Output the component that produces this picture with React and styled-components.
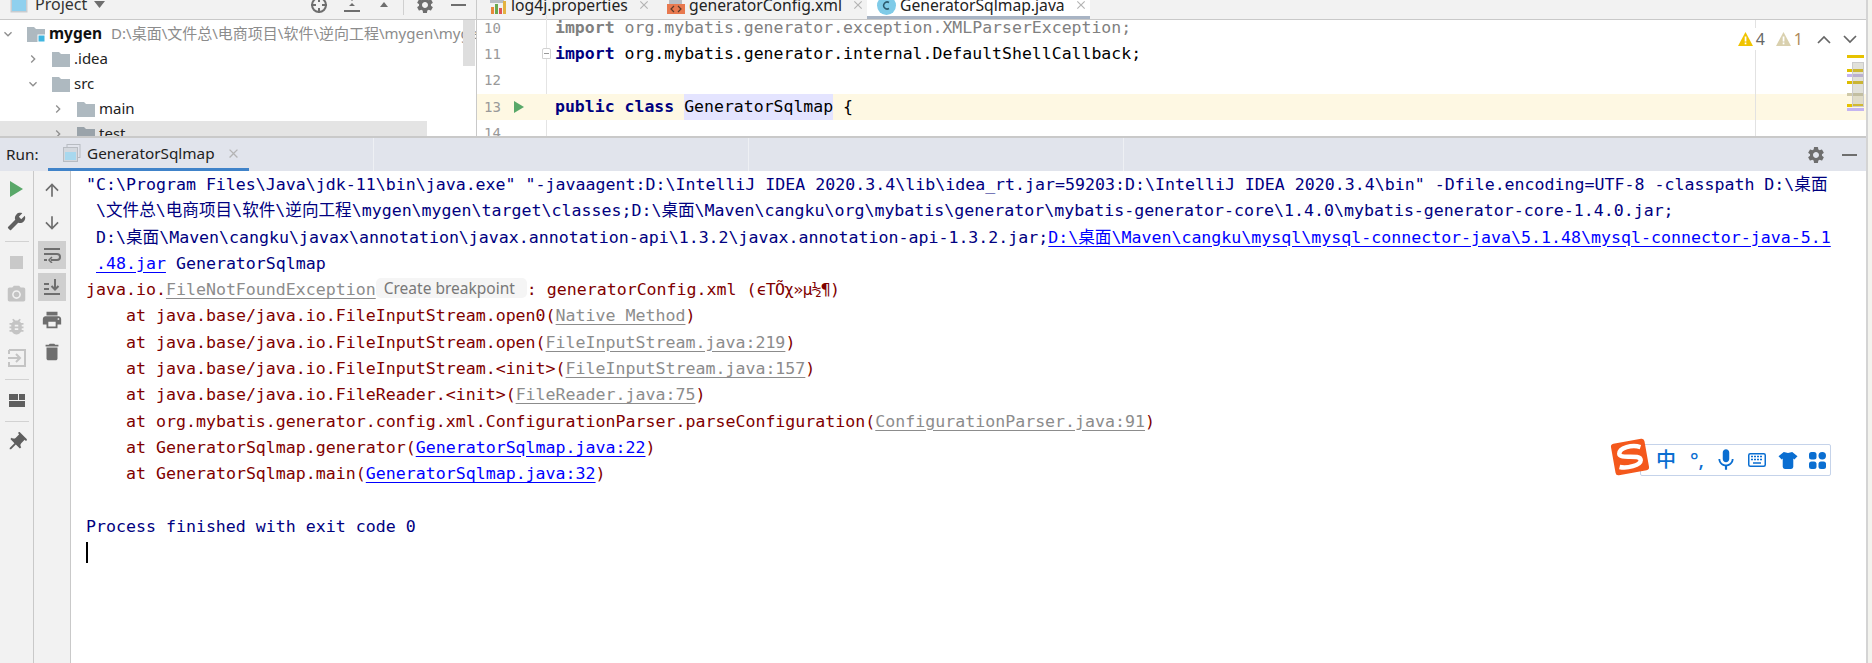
import React from "react";
import styled, { createGlobalStyle } from "styled-components";
import {
  MdSettings,
  MdBuild,
  MdPhotoCamera,
  MdBugReport,
  MdPrint,
  MdDelete,
  MdPushPin,
  MdArrowUpward,
  MdArrowDownward,
  MdMic,
  MdChevronRight,
  MdClose
} from "react-icons/md";

const uiFont = `"Noto Sans", "Noto Sans CJK SC", sans-serif`;
const monoFont = `"DejaVu Sans Mono", "Noto Sans CJK SC", monospace`;

const GlobalStyle = createGlobalStyle`
  html, body {
    margin: 0;
    padding: 0;
    background: #fff;
    overflow: hidden;
  }
`;

const Page = styled.div`
  display: flex;
  width: 1872px;
  height: 663px;
  overflow: hidden;
  position: relative;
  background: #fff;
`;

const Main = styled.div`
  flex: 1;
  min-width: 0;
  display: flex;
  flex-direction: column;
`;

const RightStrip = styled.div`
  width: 6px;
  flex: none;
  border-left: 2px solid #d4d4d4;
  box-sizing: border-box;
  background: #f3f3ee;
`;

const TopSplit = styled.div`
  display: flex;
  height: 138px;
  flex: none;
  box-sizing: border-box;
  border-bottom: 2px solid #c9c9c9;
  overflow: hidden;
`;

/* project tool window */
const ProjectPane = styled.div`
  width: 477px;
  flex: none;
  box-sizing: border-box;
  border-right: 1px solid #c9c9c9;
  position: relative;
  overflow: hidden;
`;

const PaneHeader = styled.div`
  height: 20px;
  box-sizing: border-box;
  background: #f2f2f2;
  border-bottom: 1px solid #c9c9c9;
  display: flex;
  align-items: flex-end;
  overflow: hidden;
  font: 16px/25px ${uiFont};
  color: #333;
`;

const ProjectTitle = styled.div`
  display: flex;
  align-items: center;
  height: 25px;
  flex: none;
  margin-bottom: 2px;
  padding-left: 10px;
  gap: 7px;
`;

const HeaderTools = styled.div`
  display: flex;
  align-items: center;
  height: 25px;
  margin-left: 205px;
  margin-bottom: 2px;
  gap: 16px;
  color: #6e6e6e;
`;

const ToolSep = styled.div`
  width: 1px;
  height: 20px;
  margin: 0 -5px;
  background: #d0d0d0;
`;

const Tree = styled.div`
  padding-top: 1px;
`;

const TreeRow = styled.div`
  height: 25px;
  width: 427px;
  display: flex;
  align-items: center;
  padding-left: ${p => p.$depth * 25}px;
  box-sizing: border-box;
  background: ${p => (p.$selected ? "#e4e4e4" : "transparent")};
  font: 15px/25px ${uiFont};
  color: #222;
  white-space: nowrap;
`;

const Chevron = styled.span`
  width: 16px;
  flex: none;
  display: flex;
  justify-content: center;
  color: #8f8f8f;
  transform: rotate(${p => (p.$open ? 90 : 0)}deg);
`;

const FolderSlot = styled.span`
  margin: 0 4px 0 11px;
  display: flex;
  flex: none;
`;

const RootName = styled.b`
  color: #111;
  font-size: 15.5px;
  font-weight: 700;
`;

const RootPath = styled.span`
  margin-left: 9px;
  color: #8c8c8c;
`;

const TreeThumb = styled.div`
  position: absolute;
  left: 463px;
  top: 20px;
  width: 12px;
  height: 46px;
  background: #dedede;
`;

/* editor */
const EditorPane = styled.div`
  flex: 1;
  min-width: 0;
  position: relative;
  overflow: hidden;
`;

const TabStrip = styled.div`
  height: 20px;
  box-sizing: border-box;
  background: #f2f2f2;
  border-bottom: 1px solid #c9c9c9;
  display: flex;
  align-items: flex-end;
  padding-left: 13px;
  overflow: hidden;
`;

const FileTab = styled.div`
  display: flex;
  align-items: center;
  flex: none;
  height: 25px;
  width: ${p => p.$width}px;
  box-sizing: border-box;
  gap: 4px;
  padding-left: ${p => (p.$active ? 10 : 0)}px;
  background: ${p => (p.$active ? "#fff" : "transparent")};
  box-shadow: ${p => (p.$active ? "inset 0 -3px 0 #a8b4c4" : "none")};
  font: 15.7px/25px ${uiFont};
  color: #222;
  white-space: nowrap;
  padding-bottom: 3px;
`;

const TabClose = styled.span`
  display: flex;
  color: #b4b4b4;
  margin-left: 5px;
`;

const CodeArea = styled.div`
  margin-top: -5px;
`;

const CodeRow = styled.div`
  display: flex;
  height: 26.2px;
  position: relative;
  background: ${p => (p.$current ? "#fef8e3" : "transparent")};
`;

const Gutter = styled.div`
  width: 70px;
  flex: none;
  box-sizing: border-box;
  padding-left: 7px;
  border-right: 1px solid ${p => (p.$current ? "transparent" : "#e4e4e4")};
  font: 14px/26.2px ${monoFont};
  color: #999;
  display: flex;
  align-items: center;
  gap: 13px;
`;

const CodeText = styled.div`
  padding-left: 8px;
  font: 16.5px/26.2px ${monoFont};
  color: ${p => (p.$dim ? "#808080" : "#000")};
  white-space: pre;
`;

const Keyword = styled.b`
  color: ${p => (p.$dim ? "#808080" : "#000080")};
`;

const Usage = styled.span`
  background: #e4e4ff;
  display: inline-block;
`;

const FoldMark = styled.span`
  position: absolute;
  left: 65px;
  top: 7px;
  width: 9px;
  height: 11px;
  box-sizing: border-box;
  border: 1px solid #d2d2d2;
  border-radius: 2px 2px 0 0;
  background: linear-gradient(#999, #999) center / 5px 1px no-repeat #fff;
`;

const RightGuide = styled.div`
  position: absolute;
  left: 1278px;
  top: 20px;
  bottom: 0;
  width: 1px;
  background: #e2e2e2;
`;

const InspectionWidget = styled.div`
  position: absolute;
  right: 9px;
  top: 28px;
  display: flex;
  align-items: center;
  background: #fff;
  height: 22px;
  padding-left: 3px;
  font: 16px/20px ${uiFont};
  color: #666;
`;

const Count = styled.span`
  margin: 0 11px 0 3px;
  color: ${p => p.$color || "#666"};
`;

const NavIcon = styled.svg`
  display: block;
  margin-left: ${p => p.$gap || 0}px;
  fill: none;
  stroke: #666;
  stroke-width: 1.7;
`;

const ErrorStripe = styled.div`
  position: absolute;
  left: 1370px;
  top: ${p => p.$top}px;
  width: 17px;
  height: 3px;
  background: ${p => p.$color};
`;

const StripeThumb = styled.div`
  position: absolute;
  left: 1375px;
  top: 62px;
  width: 12px;
  height: 45px;
  box-sizing: border-box;
  border: 1px solid #ccc;
  background: rgba(170, 170, 150, 0.35);
`;

/* run tool window */
const RunBar = styled.div`
  height: 33px;
  flex: none;
  display: flex;
  align-items: stretch;
  background: #e1e4ec;
  position: relative;
  font: 15.3px/33px ${uiFont};
  color: #222;
`;

const RunLabel = styled.div`
  width: 48px;
  flex: none;
  padding-left: 6px;
  box-sizing: border-box;
`;

const RunTab = styled.div`
  width: 201px;
  flex: none;
  box-sizing: border-box;
  display: flex;
  align-items: center;
  padding: 0 0 3px 15px;
  gap: 6px;
  box-shadow: inset 0 -3px 0 #4083c9;
`;

const BarDivider = styled.div`
  position: absolute;
  top: 0;
  bottom: 0;
  left: ${p => p.$left}px;
  width: 1px;
  background: #eef0f4;
`;

const RunTools = styled.div`
  margin-left: auto;
  display: flex;
  align-items: center;
  gap: 16px;
  padding-right: 9px;
  color: #6e6e6e;
`;

const MinusBar = styled.div`
  width: 15px;
  height: 2px;
  background: #6e6e6e;
`;

const RunBody = styled.div`
  flex: 1;
  display: flex;
  min-height: 0;
`;

const ToolColumn = styled.div`
  width: ${p => p.$width}px;
  flex: none;
  box-sizing: border-box;
  background: #f2f2f2;
  border-right: 1px solid #c9c9c9;
  padding-top: ${p => p.$top}px;
  display: flex;
  flex-direction: column;
  align-items: center;
`;

const ToolSlot = styled.div`
  height: ${p => p.$h || 32}px;
  width: 100%;
  flex: none;
  display: flex;
  align-items: center;
  justify-content: center;
  color: ${p => p.$color || "#6e6e6e"};
`;

const ActiveBox = styled.div`
  width: 28px;
  height: 28px;
  background: #cfcfcf;
  display: flex;
  align-items: center;
  justify-content: center;
`;

const ColumnSep = styled.div`
  width: 24px;
  height: 1px;
  margin: ${p => p.$m || 4}px 0;
  flex: none;
  background: #d2d2d2;
`;

const Console = styled.div`
  flex: 1;
  min-width: 0;
  padding: 1px 0 0 15px;
  font: 16.6px/26.3px ${monoFont};
  white-space: pre;
`;

const Line = styled.div`
  height: 26.3px;
  padding-left: ${p => p.$indent || 0}px;
  color: ${p => (p.$err ? "#7f0000" : "#00007f")};
`;

const FileLink = styled.span`
  text-decoration: underline;
  text-underline-offset: 3px;
  color: ${p => (p.$dim ? "#8c8c8c" : "#0000ff")};
`;

const Garbled = styled.span`
  letter-spacing: -0.8px;
`;

const BreakpointPill = styled.span`
  display: inline-block;
  width: 151px;
  height: 20px;
  box-sizing: border-box;
  padding-left: 8px;
  border-radius: 5px;
  background: #f5f5f5;
  color: #787878;
  font: 15.5px/20px ${uiFont};
  vertical-align: 1px;
`;

const Caret = styled.div`
  width: 2px;
  height: 21px;
  background: #000;
  margin-top: 2px;
`;

/* sogou input method floating bar */
const ImeBar = styled.div`
  position: absolute;
  left: 1640px;
  top: 444px;
  width: 191px;
  height: 32px;
  box-sizing: border-box;
  border: 1px solid #c5d3ea;
  border-radius: 2px;
  background: #fff;
  display: flex;
  align-items: center;
  padding-left: 14px;
  color: #0a6ed1;
  font: 500 20px/1 ${uiFont};
`;

const ImeItem = styled.span`
  width: ${p => p.$w}px;
  flex: none;
  display: flex;
  justify-content: center;

  svg {
    flex: none;
  }
`;

const ImeLogo = styled.svg`
  position: absolute;
  left: 1610px;
  top: 438px;
`;

const FolderIcon = ({ shade = "#aeb9c0", badge }) => (
  <svg width="18" height="16" viewBox="0 0 18 16">
    <path d="M0 1h7l2 2h9v13H0z" fill={shade} />
    {badge && <rect x="11" y="9" width="7" height="7" fill="#40b6e0" stroke="#fff" />}
  </svg>
);

const ProjectIcon = () => (
  <svg width="18" height="16" viewBox="0 0 18 16">
    <rect x="0.5" y="0.5" width="17" height="15" fill="#c8ccd0" />
    <rect x="2" y="2" width="14" height="12" fill="#8fd0ee" />
  </svg>
);

const TriangleDown = () => (
  <svg width="11" height="7" viewBox="0 0 11 7">
    <path d="M0 0h11L5.500 7z" fill="#6e6e6e" />
  </svg>
);

const Crosshair = () => (
  <svg width="18" height="18" viewBox="0 0 18 18" fill="none" stroke="#6e6e6e" strokeWidth="2">
    <circle cx="9" cy="9" r="7" />
    <path d="M9 1v5M9 12v5M1 9h5M12 9h5" />
  </svg>
);

const ExpandAll = () => (
  <svg width="16" height="16" viewBox="0 0 16 16" fill="#6e6e6e">
    <path d="M5 1h6L8 4zM5 9h6L8 6z" />
    <rect y="13" width="16" height="2" />
  </svg>
);

const CollapseAll = () => (
  <svg width="16" height="16" viewBox="0 0 16 16" fill="#6e6e6e">
    <rect y="1" width="16" height="2" />
    <path d="M4 10h8L8 5z" />
  </svg>
);

const PropsIcon = () => (
  <svg width="17" height="18" viewBox="0 0 17 18">
    <path d="M0 0h10l4 4v3H0z" fill="#b9bec4" />
    <rect x="1" y="11" width="3" height="7" fill="#e8883a" />
    <rect x="5" y="8" width="3" height="10" fill="#6aa84f" />
    <rect x="9" y="12" width="3" height="6" fill="#e05555" />
    <rect x="13" y="5" width="3" height="13" fill="#e3b341" />
  </svg>
);

const XmlIcon = () => (
  <svg width="18" height="18" viewBox="0 0 18 18">
    <path d="M2 0h9l4 4v4H2z" fill="#b9bec4" />
    <rect y="8" width="18" height="10" fill="#e8794f" />
    <path d="M7 10l-3 3 3 3M11 10l3 3-3 3" fill="none" stroke="#5a3a2a" strokeWidth="1.200" />
  </svg>
);

const ClassIcon = () => (
  <svg width="19" height="19" viewBox="0 0 19 19">
    <circle cx="9.500" cy="9.500" r="9.500" fill="#7fcbe8" />
    <path d="M12 6.500a3.500 3.500 0 1 0 0 6" fill="none" stroke="#2c5a6e" strokeWidth="1.500" />
  </svg>
);

const WarnTriangle = ({ color }) => (
  <svg width="15" height="14" viewBox="0 0 15 14">
    <path d="M7.500 0L15 14H0z" fill={color} />
    <rect x="6.700" y="4.500" width="1.700" height="5" fill="#fff" />
    <rect x="6.700" y="10.500" width="1.700" height="1.800" fill="#fff" />
  </svg>
);

const PlayGutter = () => (
  <svg width="10" height="12" viewBox="0 0 10 12">
    <path d="M0 0l10 6-10 6z" fill="#59a869" />
  </svg>
);

const ConsoleTabIcon = () => (
  <svg width="18" height="18" viewBox="0 0 18 18">
    <rect x="4" y="0.500" width="13" height="13" fill="none" stroke="#b8bcc2" />
    <rect x="0.500" y="3.500" width="14" height="14" fill="#d4d8de" stroke="#b8bcc2" />
    <rect x="2" y="8" width="11" height="8" fill="#a8d8ee" />
  </svg>
);

const PlayIcon = () => (
  <svg width="14" height="16" viewBox="0 0 14 16">
    <path d="M0 0l13 8-13 8z" fill="#59a869" />
  </svg>
);

const StopIcon = () => (
  <svg width="13" height="13" viewBox="0 0 13 13">
    <rect width="13" height="13" fill="#c9c9c9" />
  </svg>
);

const LoginIcon = () => (
  <svg width="18" height="18" viewBox="0 0 18 18" fill="none" stroke="#c4c4c4" strokeWidth="2">
    <path d="M1 1h16v16H1v-4M1 5V1" />
    <path d="M0 9h11M8 5l4 4-4 4" />
  </svg>
);

const LayoutIcon = () => (
  <svg width="16" height="14" viewBox="0 0 16 14" fill="#5f5f5f">
    <rect width="9" height="6" />
    <rect x="10" width="6" height="6" />
    <rect y="7" width="16" height="6" />
  </svg>
);

const WrapIcon = () => (
  <svg width="17" height="16" viewBox="0 0 17 16" fill="none" stroke="#6e6e6e" strokeWidth="2">
    <path d="M0 2h16M0 7h13a2.500 2.500 0 0 1 0 6H7M0 13h3" />
    <path d="M8 10l-3 3 3 3" strokeWidth="1.500" />
  </svg>
);

const ScrollEndIcon = () => (
  <svg width="17" height="16" viewBox="0 0 17 16" fill="none" stroke="#6e6e6e" strokeWidth="2">
    <path d="M0 15h16M0 10h5M0 5h5M11 0v10M7.500 7l3.500 3.500L14.500 7" />
  </svg>
);

const SogouLogo = () => (
  <ImeLogo width="40" height="38" viewBox="0 0 40 38">
    <g transform="rotate(-10 20 19)">
      <rect x="3" y="3" width="34" height="32" rx="3" fill="#f4581c" />
      <path
        d="M32 11C24 7 11 8 10 14c-1 6 21 3 20 10-1 5-15 6-22 3"
        fill="none"
        stroke="#fff"
        strokeWidth="4.500"
      />
    </g>
  </ImeLogo>
);

const KeyboardIcon = () => (
  <svg width="18" height="14" viewBox="0 0 18 14">
    <rect x="0.750" y="0.750" width="16.500" height="12.500" rx="1.500" fill="none" stroke="#0a6ed1" strokeWidth="1.500" />
    <path
      d="M3 3.500h12M3 6.500h12"
      fill="none"
      stroke="#0a6ed1"
      strokeWidth="1.500"
      strokeDasharray="2 1"
    />
    <path d="M5 10h8" stroke="#0a6ed1" strokeWidth="1.500" />
  </svg>
);

const ShirtIcon = () => (
  <svg width="20" height="19" viewBox="0 0 18 18" fill="#0a6ed1">
    <path d="M5 1l4 1 4-1 5 4-3 3-1-1v8a2 2 0 0 1-2 2H6a2 2 0 0 1-2-2V7L3 8 0 5z" />
  </svg>
);

const GridIcon = () => (
  <svg width="17" height="17" viewBox="0 0 17 17" fill="#0a6ed1">
    <rect width="7.500" height="7.500" rx="2.500" />
    <rect x="9.500" width="7.500" height="7.500" rx="3.700" />
    <rect y="9.500" width="7.500" height="7.500" rx="2.500" />
    <rect x="9.500" y="9.500" width="7.500" height="7.500" rx="2.500" />
  </svg>
);

const stripes = [
  { top: 55, color: "#e6c200" },
  { top: 69, color: "#e0c000" },
  { top: 74, color: "#c4b4f0" },
  { top: 81, color: "#dcbc00" },
  { top: 93, color: "#cfc9a8" },
  { top: 104, color: "#e6c200" },
  { top: 108, color: "#c4b4f0" }
];

const traces = [
  <>at java.base/java.io.FileInputStream.open0(<FileLink $dim>Native Method</FileLink>)</>,
  <>at java.base/java.io.FileInputStream.open(<FileLink $dim>FileInputStream.java:219</FileLink>)</>,
  <>at java.base/java.io.FileInputStream.&lt;init&gt;(<FileLink $dim>FileInputStream.java:157</FileLink>)</>,
  <>at java.base/java.io.FileReader.&lt;init&gt;(<FileLink $dim>FileReader.java:75</FileLink>)</>,
  <>at org.mybatis.generator.config.xml.ConfigurationParser.parseConfiguration(<FileLink $dim>ConfigurationParser.java:91</FileLink>)</>,
  <>at GeneratorSqlmap.generator(<FileLink>GeneratorSqlmap.java:22</FileLink>)</>,
  <>at GeneratorSqlmap.main(<FileLink>GeneratorSqlmap.java:32</FileLink>)</>
];

const App = () => (
  <Page>
    <GlobalStyle />
    <Main>
      <TopSplit>
        <ProjectPane>
          <PaneHeader>
            <ProjectTitle>
              <ProjectIcon />
              Project
              <TriangleDown />
            </ProjectTitle>
            <HeaderTools>
              <Crosshair />
              <ExpandAll />
              <CollapseAll />
              <ToolSep />
              <MdSettings size={20} />
              <MinusBar />
            </HeaderTools>
          </PaneHeader>
          <Tree>
            <TreeRow $depth={0}>
              <Chevron $open><MdChevronRight size={18} /></Chevron>
              <FolderSlot><FolderIcon badge /></FolderSlot>
              <RootName>mygen</RootName>
              <RootPath>D:\桌面\文件总\电商项目\软件\逆向工程\mygen\mygen</RootPath>
            </TreeRow>
            <TreeRow $depth={1}>
              <Chevron><MdChevronRight size={18} /></Chevron>
              <FolderSlot><FolderIcon /></FolderSlot>
              .idea
            </TreeRow>
            <TreeRow $depth={1}>
              <Chevron $open><MdChevronRight size={18} /></Chevron>
              <FolderSlot><FolderIcon /></FolderSlot>
              src
            </TreeRow>
            <TreeRow $depth={2}>
              <Chevron><MdChevronRight size={18} /></Chevron>
              <FolderSlot><FolderIcon /></FolderSlot>
              main
            </TreeRow>
            <TreeRow $depth={2} $selected>
              <Chevron><MdChevronRight size={18} /></Chevron>
              <FolderSlot><FolderIcon shade="#9aa3aa" /></FolderSlot>
              test
            </TreeRow>
          </Tree>
          <TreeThumb />
        </ProjectPane>
        <EditorPane>
          <TabStrip>
            <FileTab $width={177}>
              <PropsIcon />
              log4j.properties
              <TabClose><MdClose size={14} /></TabClose>
            </FileTab>
            <FileTab $width={200}>
              <XmlIcon />
              generatorConfig.xml
              <TabClose><MdClose size={14} /></TabClose>
            </FileTab>
            <FileTab $width={223} $active>
              <ClassIcon />
              GeneratorSqlmap.java
              <TabClose><MdClose size={14} /></TabClose>
            </FileTab>
          </TabStrip>
          <CodeArea>
            <CodeRow>
              <Gutter>10</Gutter>
              <CodeText $dim><Keyword $dim>import</Keyword> org.mybatis.generator.exception.XMLParserException;</CodeText>
            </CodeRow>
            <CodeRow>
              <Gutter>11</Gutter>
              <FoldMark />
              <CodeText><Keyword>import</Keyword> org.mybatis.generator.internal.DefaultShellCallback;</CodeText>
            </CodeRow>
            <CodeRow>
              <Gutter>12</Gutter>
            </CodeRow>
            <CodeRow $current>
              <Gutter $current>13 <PlayGutter /></Gutter>
              <CodeText><Keyword>public</Keyword> <Keyword>class</Keyword> <Usage>GeneratorSqlmap</Usage> {"{"}</CodeText>
            </CodeRow>
            <CodeRow>
              <Gutter>14</Gutter>
            </CodeRow>
          </CodeArea>
          <RightGuide />
          {stripes.map(s => (
            <ErrorStripe key={s.top} $top={s.top} $color={s.color} />
          ))}
          <StripeThumb />
          <InspectionWidget>
            <WarnTriangle color="#f0c400" />
            <Count>4</Count>
            <WarnTriangle color="#d9d0ae" />
            <Count $color="#b08a5a">1</Count>
            <NavIcon $gap={3} width="14" height="9" viewBox="0 0 14 9">
              <path d="M1 8l6-6 6 6" />
            </NavIcon>
            <NavIcon $gap={12} width="14" height="9" viewBox="0 0 14 9">
              <path d="M1 1l6 6 6-6" />
            </NavIcon>
          </InspectionWidget>
        </EditorPane>
      </TopSplit>
      <RunBar>
        <RunLabel>Run:</RunLabel>
        <RunTab>
          <ConsoleTabIcon />
          GeneratorSqlmap
          <TabClose><MdClose size={15} /></TabClose>
        </RunTab>
        <BarDivider $left={373} />
        <BarDivider $left={748} />
        <BarDivider $left={1123} />
        <RunTools>
          <MdSettings size={20} />
          <MinusBar />
        </RunTools>
      </RunBar>
      <RunBody>
        <ToolColumn $width={34} $top={2}>
          <ToolSlot><PlayIcon /></ToolSlot>
          <ToolSlot $color="#5f5f5f"><MdBuild size={19} style={{ transform: "scaleX(-1)" }} /></ToolSlot>
          <ColumnSep />
          <ToolSlot><StopIcon /></ToolSlot>
          <ToolSlot $color="#c4c4c4"><MdPhotoCamera size={21} /></ToolSlot>
          <ToolSlot $color="#c4c4c4"><MdBugReport size={21} /></ToolSlot>
          <ToolSlot><LoginIcon /></ToolSlot>
          <ColumnSep $m={5} />
          <ToolSlot><LayoutIcon /></ToolSlot>
          <ColumnSep />
          <ToolSlot $color="#5f5f5f"><MdPushPin size={23} style={{ transform: "rotate(45deg)" }} /></ToolSlot>
        </ToolColumn>
        <ToolColumn $width={37} $top={3}>
          <ToolSlot $h={32.4}><MdArrowUpward size={20} /></ToolSlot>
          <ToolSlot $h={32.4}><MdArrowDownward size={20} /></ToolSlot>
          <ToolSlot $h={32.4}><ActiveBox><WrapIcon /></ActiveBox></ToolSlot>
          <ToolSlot $h={32.4}><ActiveBox><ScrollEndIcon /></ActiveBox></ToolSlot>
          <ToolSlot $h={32.4}><MdPrint size={22} /></ToolSlot>
          <ToolSlot $h={32.4}><MdDelete size={22} /></ToolSlot>
        </ToolColumn>
        <Console>
          <Line>"C:\Program Files\Java\jdk-11\bin\java.exe" "-javaagent:D:\IntelliJ IDEA 2020.3.4\lib\idea_rt.jar=59203:D:\IntelliJ IDEA 2020.3.4\bin" -Dfile.encoding=UTF-8 -classpath D:\桌面</Line>
          <Line $indent={10}>\文件总\电商项目\软件\逆向工程\mygen\mygen\target\classes;D:\桌面\Maven\cangku\org\mybatis\generator\mybatis-generator-core\1.4.0\mybatis-generator-core-1.4.0.jar;</Line>
          <Line $indent={10}>D:\桌面\Maven\cangku\javax\annotation\javax.annotation-api\1.3.2\javax.annotation-api-1.3.2.jar;<FileLink>D:\桌面\Maven\cangku\mysql\mysql-connector-java\5.1.48\mysql-connector-java-5.1</FileLink></Line>
          <Line $indent={10}><FileLink>.48.jar</FileLink> GeneratorSqlmap</Line>
          <Line $err>
            java.io.<FileLink $dim>FileNotFoundException</FileLink>
            <BreakpointPill>Create breakpoint</BreakpointPill>
            : generatorConfig.xml (<Garbled>ϵTÕχ»µ½¶</Garbled>)
          </Line>
          {traces.map((t, i) => (
            <Line key={i} $err $indent={40}>{t}</Line>
          ))}
          <Line />
          <Line>Process finished with exit code 0</Line>
          <Caret />
        </Console>
      </RunBody>
    </Main>
    <RightStrip />
    <ImeBar>
      <ImeItem $w={22}>中</ImeItem>
      <ImeItem $w={40}>°,</ImeItem>
      <ImeItem $w={18}><MdMic size={26} /></ImeItem>
      <ImeItem $w={44}><KeyboardIcon /></ImeItem>
      <ImeItem $w={18}><ShirtIcon /></ImeItem>
      <ImeItem $w={40}><GridIcon /></ImeItem>
    </ImeBar>
    <SogouLogo />
  </Page>
);

export default App;
